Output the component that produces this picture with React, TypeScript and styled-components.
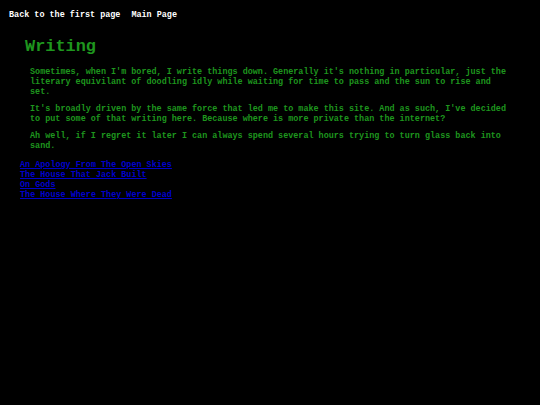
import React from 'react';
import styled, { createGlobalStyle } from 'styled-components';

const GlobalStyle = createGlobalStyle`
  html, body {
    margin: 0;
    padding: 0;
    background: #000;
  }
  body {
    font-family: "Liberation Mono", "Courier New", monospace;
    font-weight: bold;
    font-size: 8.45px;
    line-height: 10px;
  }
`;

const Page = styled.div`
  min-height: 405px;
  background: #000;
  padding: 10px 0 0 9px;
  box-sizing: border-box;
`;

const Nav = styled.nav`
  display: flex;
  gap: 11px;
  height: 10px;
`;

const NavLink = styled.a`
  color: #fff;
  text-decoration: none;
`;

const Heading = styled.h1`
  margin: 17px 0 0 16px;
  font-size: 16.9px;
  line-height: 20px;
  color: #1e961e;
`;

const Body = styled.div`
  margin: 10px 0 0 21px;
  width: 482px;
`;

const Para = styled.p`
  margin: 0 0 7px;
  color: #1e961e;
`;

const LinkList = styled.div`
  display: flex;
  flex-direction: column;
  margin: 9px 0 0 11px;
`;

const StoryLink = styled.a`
  color: #0000cc;
  text-decoration: underline;
  align-self: flex-start;
`;

const stories = [
  'An Apology From The Open Skies',
  'The House That Jack Built',
  'On Gods',
  'The House Where They Were Dead',
];

export default function App() {
  return (
    <>
      <GlobalStyle />
      <Page>
        <Nav>
          <NavLink href="#">Back to the first page</NavLink>
          <NavLink href="#">Main Page</NavLink>
        </Nav>
        <Heading>Writing</Heading>
        <Body>
          <Para>
            Sometimes, when I'm bored, I write things down. Generally it's nothing in particular, just the
            literary equivilant of doodling idly while waiting for time to pass and the sun to rise and set.
          </Para>
          <Para>
            It's broadly driven by the same force that led me to make this site. And as such, I've decided
            to put some of that writing here. Because where is more private than the internet?
          </Para>
          <Para>
            Ah well, if I regret it later I can always spend several hours trying to turn glass back into
            sand.
          </Para>
        </Body>
        <LinkList>
          {stories.map((s) => (
            <StoryLink key={s} href="#">{s}</StoryLink>
          ))}
        </LinkList>
      </Page>
    </>
  );
}
